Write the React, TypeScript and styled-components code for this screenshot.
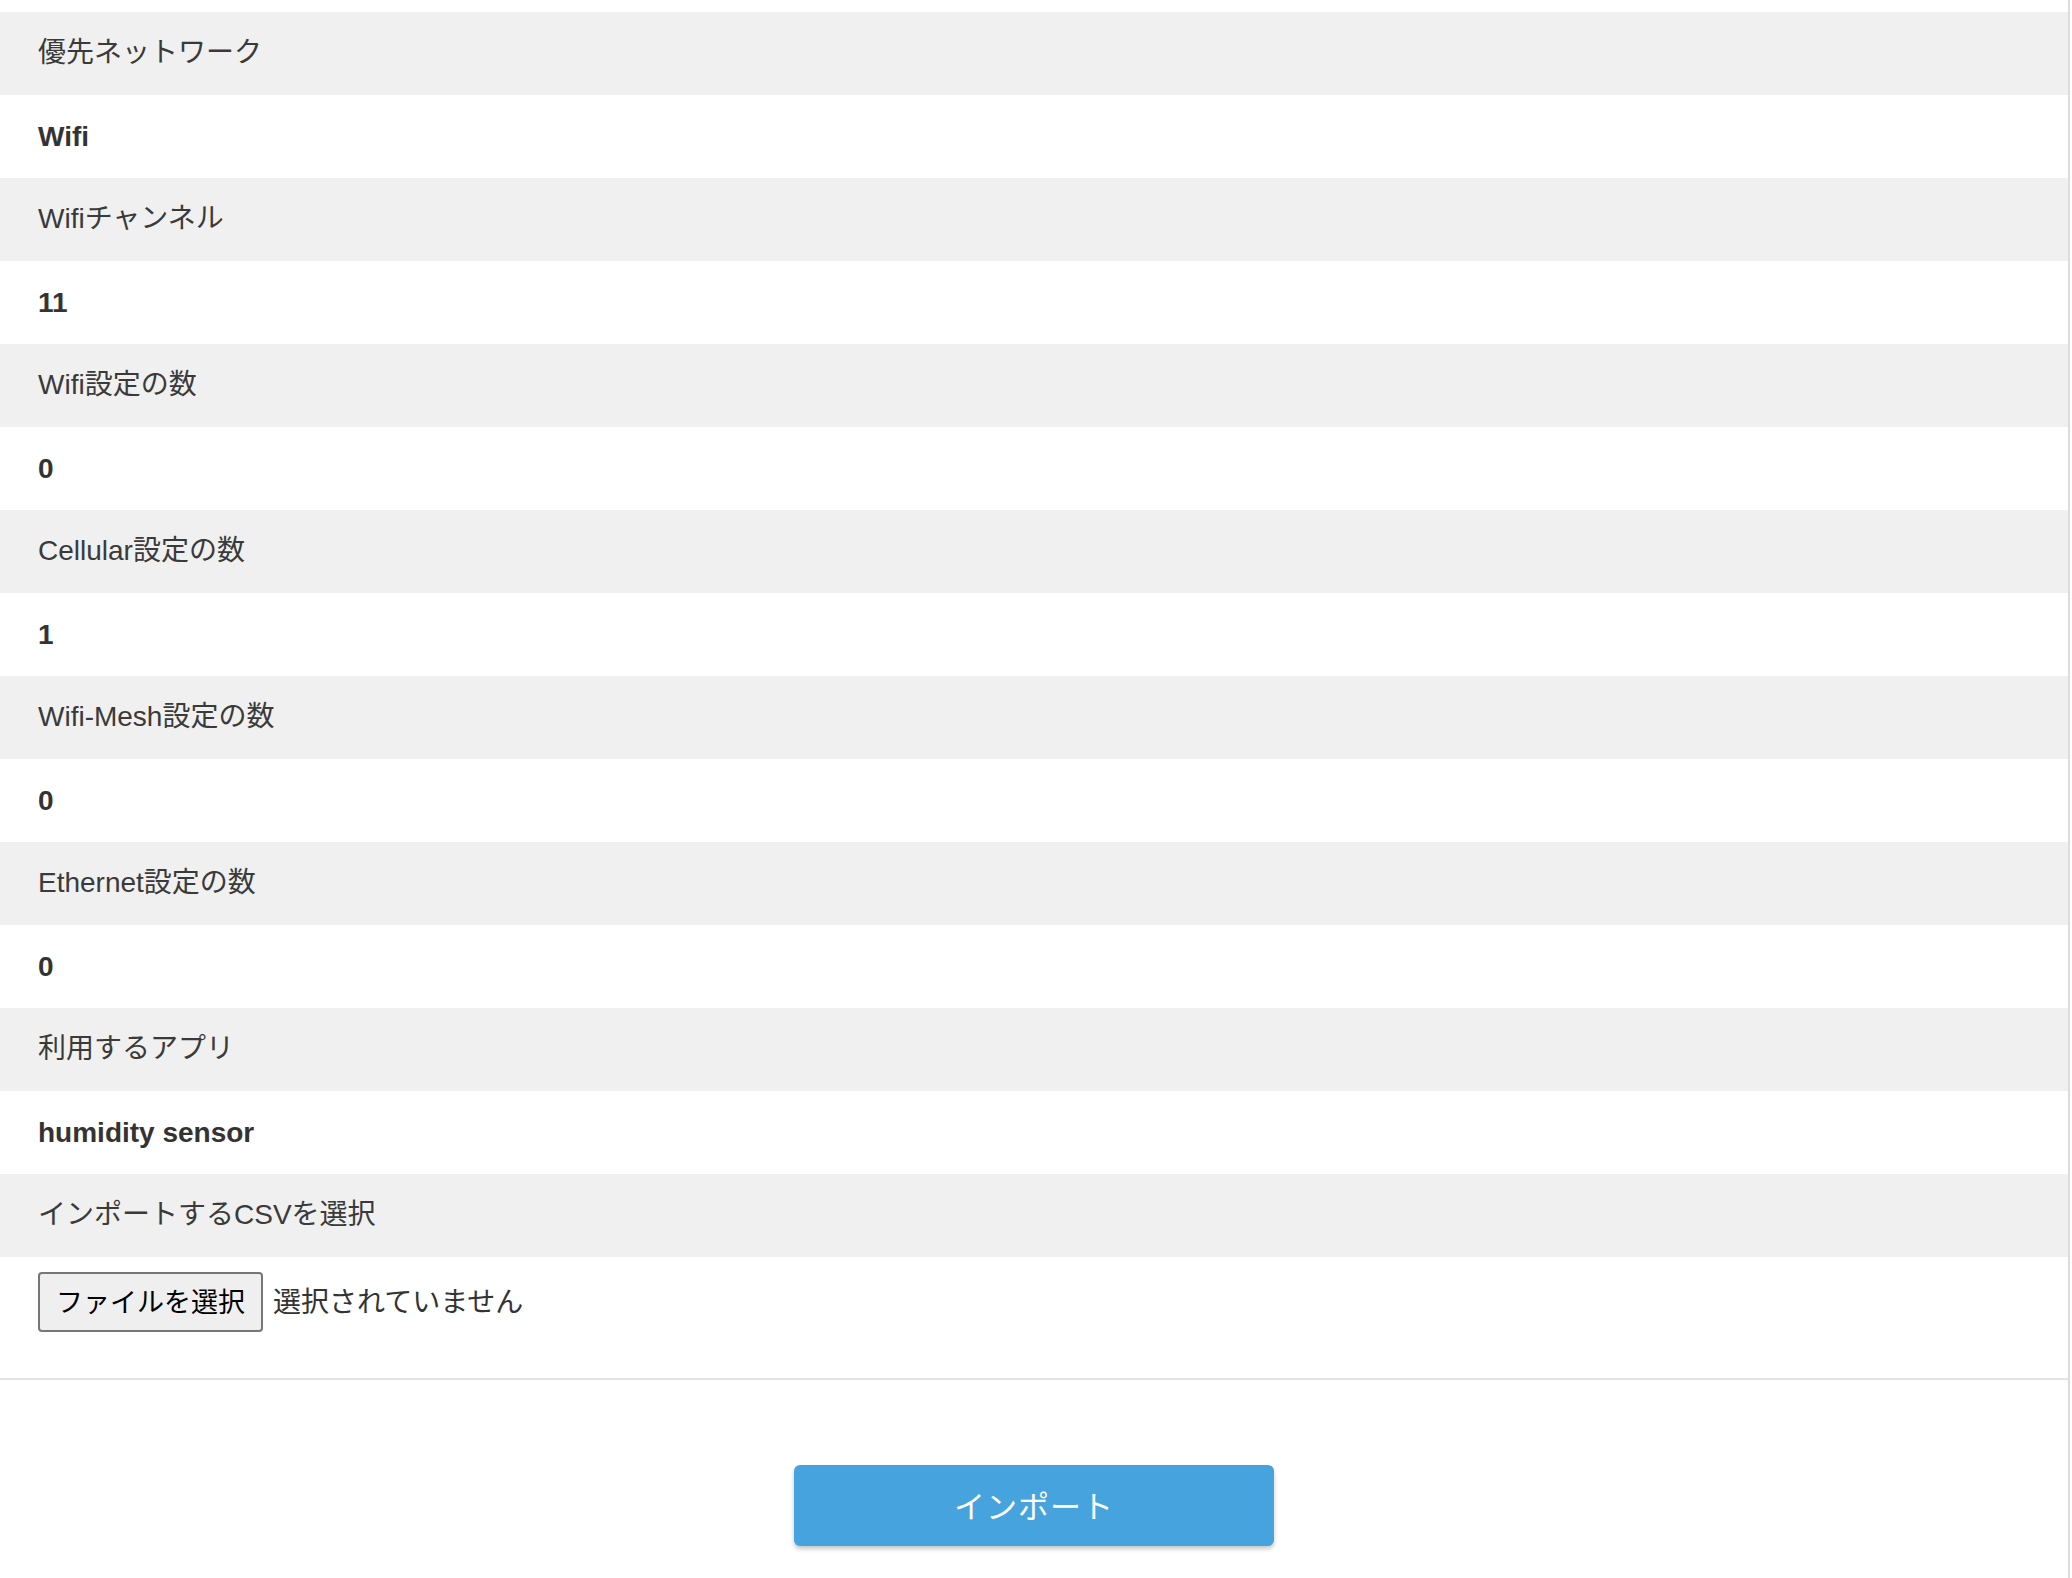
import React from 'react';
import styled, { createGlobalStyle } from 'styled-components';

const GlobalStyle = createGlobalStyle`
  html, body {
    margin: 0;
    padding: 0;
    background: #ffffff;
  }

  body {
    font-family: 'Liberation Sans', 'Noto Sans CJK JP', sans-serif;
    color: #333333;
  }
`;

const Page = styled.div`
  width: 2070px;
  min-height: 1578px;
  border-right: 2px solid #dddddd;
  padding-top: 12px;
  box-sizing: border-box;
`;

const List = styled.dl`
  margin: 0;
`;

const Row = styled.div<{ $label?: boolean }>`
  display: flex;
  align-items: center;
  height: 83px;
  padding-left: 38px;
  padding-bottom: ${(p) => (p.$label ? '7px' : '0')};
  box-sizing: border-box;
  background: ${(p) => (p.$label ? '#f0f0f0' : '#ffffff')};
  font-size: 28px;
  font-weight: ${(p) => (p.$label ? 400 : 700)};
  color: ${(p) => (p.$label ? '#3a3a3a' : '#333333')};
`;

const FileRow = styled.div`
  display: flex;
  align-items: flex-start;
  gap: 10px;
  height: 123px;
  padding: 15px 0 0 38px;
  box-sizing: border-box;
  border-bottom: 2px solid #e3e3e3;
`;

const FileButton = styled.button`
  height: 60px;
  padding: 0 16px 3px;
  font-family: 'Liberation Sans', 'Noto Sans CJK JP', sans-serif;
  font-size: 27px;
  color: #000000;
  background: #efefef;
  border: 2px solid #767676;
  border-radius: 4px;
`;

const FileStatus = styled.span`
  display: flex;
  align-items: center;
  height: 56px;
  font-size: 28px;
  color: #333333;
`;

const Footer = styled.div`
  display: flex;
  justify-content: center;
  padding-top: 85px;
`;

const ImportButton = styled.button`
  width: 480px;
  height: 81px;
  padding-bottom: 4px;
  font-family: 'Liberation Sans', 'Noto Sans CJK JP', sans-serif;
  font-size: 31px;
  letter-spacing: 1px;
  color: #ffffff;
  background: #47a3de;
  border: none;
  border-radius: 6px;
  box-shadow: 0 3px 4px rgba(0, 0, 0, 0.22);
`;

const settings: [string, string][] = [
  ['優先ネットワーク', 'Wifi'],
  ['Wifiチャンネル', '11'],
  ['Wifi設定の数', '0'],
  ['Cellular設定の数', '1'],
  ['Wifi-Mesh設定の数', '0'],
  ['Ethernet設定の数', '0'],
  ['利用するアプリ', 'humidity sensor'],
];

const App: React.FC = () => {
  return (
    <Page>
      <GlobalStyle />
      <List>
        {settings.map(([label, value]) => (
          <React.Fragment key={label}>
            <Row $label>{label}</Row>
            <Row>{value}</Row>
          </React.Fragment>
        ))}
        <Row $label>インポートするCSVを選択</Row>
      </List>
      <FileRow>
        <FileButton>ファイルを選択</FileButton>
        <FileStatus>選択されていません</FileStatus>
      </FileRow>
      <Footer>
        <ImportButton>インポート</ImportButton>
      </Footer>
    </Page>
  );
};

export default App;
